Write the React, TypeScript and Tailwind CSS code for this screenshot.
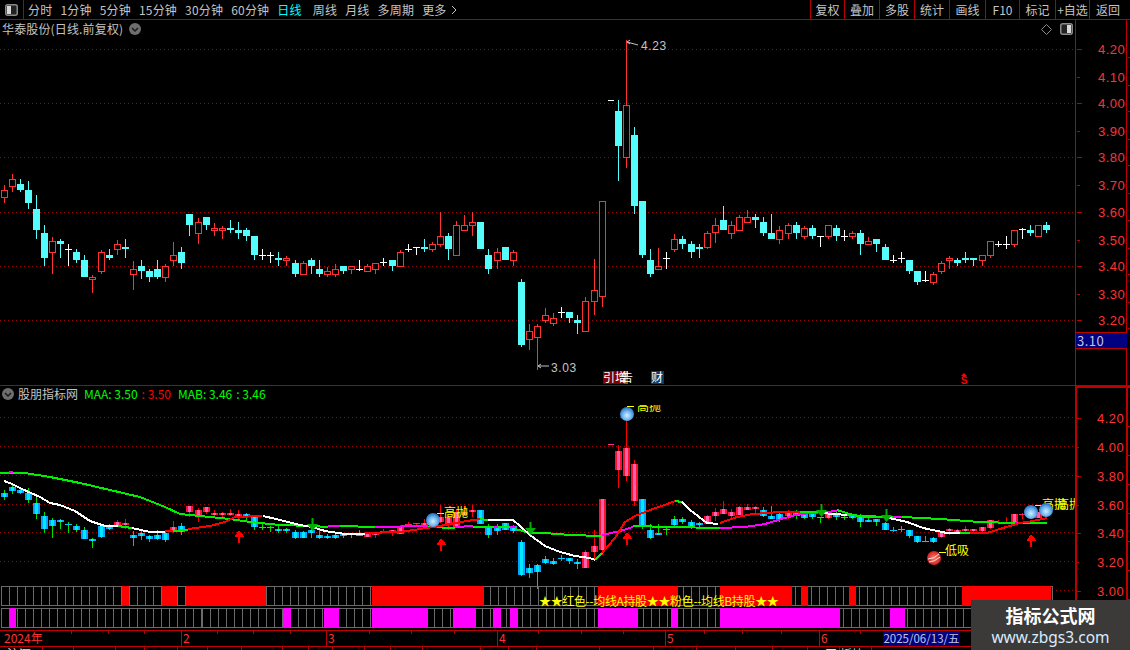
import React from 'react';

// x, body top, body bottom, wick top, wick bottom, type (r = red, c = cyan, w = doji)
type Bar = [number, number, number, number, number, string];

const bars: Bar[] = [
  [4, 190, 198, 185, 203, 'r'], [12, 179, 187, 174, 192, 'r'], [20, 184, 190, 179, 192, 'c'], [28, 190, 203, 181, 209, 'c'],
  [36, 209, 230, 195, 239, 'c'], [44, 233, 258, 225, 266, 'c'], [52, 241, 253, 237, 274, 'r'], [60, 241, 244, 239, 258, 'c'],
  [68, 249, 249, 244, 266, 'w'], [76, 252, 260, 249, 263, 'c'], [84, 260, 277, 255, 277, 'c'], [92, 277, 280, 275, 293, 'r'],
  [101, 252, 272, 250, 274, 'r'], [109, 255, 258, 249, 260, 'c'], [117, 244, 250, 240, 255, 'r'], [125, 247, 249, 239, 258, 'c'],
  [133, 269, 275, 261, 290, 'r'], [141, 266, 271, 260, 279, 'c'], [149, 271, 277, 269, 282, 'c'], [157, 269, 277, 260, 279, 'c'],
  [165, 266, 278, 264, 282, 'r'], [173, 255, 261, 242, 266, 'r'], [181, 252, 263, 247, 269, 'c'], [189, 214, 225, 214, 236, 'c'],
  [198, 222, 234, 218, 244, 'r'], [206, 217, 225, 217, 230, 'c'], [214, 228, 231, 223, 236, 'r'], [222, 228, 231, 226, 239, 'r'],
  [230, 228, 230, 220, 233, 'c'], [238, 230, 233, 222, 239, 'c'], [246, 230, 236, 228, 241, 'c'], [254, 236, 255, 236, 260, 'c'],
  [262, 255, 255, 249, 260, 'w'], [270, 255, 255, 252, 263, 'w'], [278, 258, 260, 252, 266, 'c'], [286, 258, 261, 256, 266, 'r'],
  [295, 263, 274, 260, 277, 'c'], [303, 263, 275, 261, 275, 'r'], [311, 260, 266, 258, 274, 'c'], [319, 269, 274, 260, 277, 'c'],
  [327, 271, 275, 267, 277, 'r'], [335, 269, 275, 264, 277, 'r'], [343, 266, 271, 266, 274, 'c'], [351, 266, 270, 266, 274, 'r'],
  [359, 269, 269, 260, 271, 'w'], [367, 266, 272, 264, 272, 'r'], [375, 263, 270, 263, 274, 'r'], [383, 262, 262, 258, 266, 'w'],
  [392, 260, 266, 260, 271, 'c'], [400, 252, 267, 250, 267, 'r'], [408, 249, 249, 244, 252, 'w'], [416, 247, 247, 247, 255, 'w'],
  [424, 247, 249, 239, 252, 'c'], [432, 244, 250, 242, 252, 'r'], [440, 236, 245, 212, 247, 'r'], [448, 236, 249, 233, 260, 'c'],
  [456, 225, 256, 221, 256, 'r'], [464, 225, 231, 215, 231, 'r'], [472, 222, 226, 212, 236, 'r'], [480, 222, 249, 222, 249, 'c'],
  [488, 255, 269, 249, 274, 'c'], [497, 252, 261, 248, 269, 'r'], [505, 247, 260, 247, 260, 'c'], [513, 252, 261, 250, 266, 'r'],
  [521, 282, 345, 279, 347, 'c'], [529, 331, 340, 324, 350, 'r'], [537, 326, 338, 324, 370, 'r'], [545, 315, 321, 308, 323, 'r'],
  [553, 318, 324, 313, 326, 'r'], [561, 312, 312, 307, 318, 'w'], [569, 312, 318, 312, 323, 'c'], [577, 320, 323, 315, 334, 'c'],
  [585, 301, 332, 297, 332, 'r'], [594, 290, 302, 259, 315, 'r'], [602, 201, 297, 201, 307, 'r'], [618, 111, 146, 100, 181, 'c'],
  [626, 105, 158, 40, 168, 'r'], [634, 135, 206, 127, 214, 'c'], [642, 201, 255, 201, 258, 'c'], [650, 260, 274, 249, 277, 'c'],
  [658, 266, 270, 248, 270, 'r'], [666, 258, 258, 252, 269, 'w'], [674, 239, 250, 234, 252, 'r'], [682, 239, 244, 236, 249, 'c'],
  [691, 244, 252, 241, 258, 'c'], [699, 247, 249, 244, 258, 'c'], [707, 233, 248, 231, 249, 'r'], [715, 225, 233, 218, 243, 'r'],
  [723, 220, 230, 206, 230, 'c'], [731, 225, 234, 221, 239, 'r'], [739, 217, 231, 215, 231, 'r'], [747, 217, 223, 210, 223, 'r'],
  [755, 217, 220, 214, 228, 'c'], [763, 222, 233, 217, 236, 'c'], [771, 233, 239, 214, 239, 'c'], [779, 230, 240, 226, 244, 'r'],
  [788, 225, 234, 223, 239, 'r'], [796, 225, 233, 222, 239, 'c'], [804, 228, 237, 226, 239, 'r'], [812, 228, 236, 225, 239, 'c'],
  [820, 236, 236, 236, 247, 'w'], [828, 225, 237, 225, 239, 'r'], [836, 228, 236, 225, 241, 'c'], [844, 236, 236, 230, 241, 'w'],
  [852, 233, 237, 231, 239, 'r'], [860, 233, 244, 230, 255, 'c'], [868, 241, 245, 237, 245, 'r'], [876, 239, 244, 239, 252, 'c'],
  [885, 247, 260, 244, 260, 'c'], [893, 260, 260, 255, 263, 'w'], [901, 258, 258, 252, 263, 'w'], [909, 260, 271, 260, 274, 'c'],
  [917, 271, 282, 271, 285, 'c'], [925, 280, 280, 271, 282, 'w'], [933, 274, 283, 272, 285, 'r'], [941, 263, 272, 261, 274, 'r'],
  [949, 258, 261, 256, 269, 'r'], [957, 260, 263, 258, 266, 'c'], [965, 258, 260, 252, 263, 'c'], [973, 258, 260, 258, 266, 'c'],
  [982, 255, 261, 255, 266, 'r'], [990, 241, 256, 241, 258, 'r'], [998, 244, 244, 241, 247, 'w'], [1006, 244, 244, 236, 249, 'w'],
  [1014, 230, 245, 230, 247, 'r'], [1022, 229, 229, 228, 239, 'w'], [1030, 230, 233, 225, 236, 'c'], [1038, 225, 237, 225, 237, 'r'],
  [1046, 225, 230, 222, 233, 'c'],
];

// the indicator pane colours its bars by its own signal, not by open/close
const pinkBars = [[117, 125], [173, 173], [189, 238], [367, 472], [585, 634], [707, 755], [788, 788], [828, 828], [941, 1046]];
const isPink = (x: number) => pinkBars.some(([a, b]) => x >= a && x <= b);

const lowerY = (y: number) => 562 - (320 - y) * 0.531;

const WHITE = '#ffffff';
const GREEN = '#00f000';
const RED = '#ff0000';
const PINK = '#ff00ff';

const lines: [string, number[][]][] = [
  [GREEN, [[0, 473], [25, 473], [50, 477], [80, 483], [110, 490], [140, 497], [165, 507], [180, 514], [200, 516], [230, 519], [250, 522], [280, 525], [312, 526], [328, 527]]],
  [PINK, [[9, 472], [13, 472]]],
  [PINK, [[328, 526], [340, 526]]],
  [GREEN, [[340, 526], [375, 527]]],
  [PINK, [[375, 527], [428, 526]]],
  [GREEN, [[428, 527], [455, 528]]],
  [PINK, [[455, 527], [473, 526]]],
  [GREEN, [[473, 527], [494, 527]]],
  [PINK, [[494, 527], [498, 527]]],
  [GREEN, [[498, 527], [510, 527]]],
  [PINK, [[510, 527], [515, 527]]],
  [GREEN, [[515, 529], [530, 533], [545, 533], [570, 535], [602, 536]]],
  [PINK, [[602, 535], [620, 531], [633, 527]]],
  [GREEN, [[633, 526], [670, 527], [720, 528]]],
  [PINK, [[720, 528], [745, 527], [765, 524], [785, 518], [800, 514], [837, 511]]],
  [GREEN, [[837, 510], [853, 515], [867, 517], [893, 517]]],
  [PINK, [[893, 517], [902, 517]]],
  [GREEN, [[902, 517], [940, 519], [980, 522], [1015, 523]]],
  [PINK, [[1015, 523], [1023, 523]]],
  [GREEN, [[1023, 523], [1047, 523]]],
  [WHITE, [[4, 481], [12, 484], [22, 489], [40, 497], [50, 503], [60, 505], [75, 511], [90, 521], [105, 526], [118, 526]]],
  [GREEN, [[118, 526], [132, 528]]],
  [WHITE, [[132, 528], [150, 532], [165, 532]]],
  [RED, [[165, 531], [173, 531]]],
  [GREEN, [[173, 531], [188, 530]]],
  [RED, [[188, 529], [210, 526], [225, 522], [235, 517], [262, 516]]],
  [WHITE, [[263, 516], [280, 520], [300, 525], [312, 527], [325, 531], [345, 534], [365, 534]]],
  [RED, [[365, 533], [400, 532], [420, 529], [440, 526], [455, 523], [480, 519]]],
  [GREEN, [[480, 519], [488, 520]]],
  [WHITE, [[488, 520], [513, 520], [520, 526], [530, 535], [545, 546], [560, 552], [575, 556], [590, 558], [595, 560]]],
  [GREEN, [[595, 560], [602, 553]]],
  [RED, [[602, 553], [615, 538], [625, 522], [635, 516], [650, 510], [670, 503], [675, 501]]],
  [GREEN, [[675, 501], [682, 502]]],
  [WHITE, [[682, 502], [690, 510], [707, 523], [718, 524]]],
  [RED, [[720, 523], [737, 517], [753, 514], [780, 512], [800, 512]]],
  [GREEN, [[800, 512], [822, 512]]],
  [WHITE, [[822, 513], [847, 515]]],
  [GREEN, [[847, 515], [885, 517]]],
  [WHITE, [[885, 517], [907, 522], [923, 528], [947, 533], [960, 533]]],
  [GREEN, [[960, 533], [970, 533]]],
  [RED, [[970, 533], [987, 533], [1003, 528], [1020, 523], [1033, 521], [1047, 518]]],
];

const redRow = [[122, 129], [162, 177], [186, 266], [372, 484], [598, 678], [720, 792], [801, 808], [849, 856], [962, 1051]];
const pinkRow = [[9, 16], [283, 291], [324, 339], [372, 428], [453, 476], [493, 501], [510, 518], [598, 638], [671, 678], [720, 840], [890, 905]];
const cells = Array.from({ length: 131 }, (_, i) => Math.round(1 + i * 8.02));

const navLeft = ['分时', '1分钟', '5分钟', '15分钟', '30分钟', '60分钟', '日线', '周线', '月线', '多周期'];

const upperTicks = [
  [49, '4.20'], [77, '4.10'], [103, '4.00'], [131, '3.90'], [157, '3.80'], [185, '3.70'],
  [212, '3.60'], [240, '3.50'], [266, '3.40'], [294, '3.30'], [320, '3.20'],
] as [number, string][];
const lowerTicks = [[418, '4.20'], [447, '4.00'], [476, '3.80'], [505, '3.60'], [533, '3.40'], [562, '3.20'], [591, '3.00']] as [number, string][];

const smallTicks = [71, 108, 144, 217, 253, 290, 369, 411, 454, 538, 581, 623, 704, 742, 781, 860];
const monthTicks = [[181, '2'], [326, '3'], [497, '4'], [665, '5'], [819, '6']] as [number, string][];
const tabLines = [42, 73, 115, 144, 177, 207, 241, 282, 308, 332, 364, 390, 422, 480, 508, 536, 599, 653, 696, 735, 772, 807, 839, 871];

const CJK = '"Noto Sans CJK SC","Liberation Sans",sans-serif';

function ToggleIcon({ side }: { side: 'left' | 'right' }) {
  return (
    <svg width="13" height="12" viewBox="0 0 13 12">
      <rect x="0.75" y="0.75" width="11.5" height="10.5" rx="2" fill="#222" stroke="#8a8a8a" strokeWidth="1.5" />
      <rect x={side === 'left' ? 2 : 7} y="2" width="4" height="8" fill="#d8d8d8" />
    </svg>
  );
}

function Chevron() {
  return (
    <svg width="12" height="12" viewBox="0 0 12 12">
      <circle cx="6" cy="6" r="6" fill="#6e6e6e" />
      <path d="M3 5 L6 8 L9 5" fill="none" stroke="#1a1a1a" strokeWidth="1.5" />
    </svg>
  );
}

function UpperCandle({ b }: { b: Bar }) {
  const [x, top, bot, wt, wb, t] = b;
  const color = t === 'r' ? '#ff3232' : t === 'c' ? '#54fcfc' : '#ffffff';
  return (
    <g shapeRendering="crispEdges">
      <rect x={x} y={wt} width="1" height={wb - wt} fill={color} />
      {t === 'w' ? (
        <rect x={x - 3} y={top} width="7" height="1" fill={color} />
      ) : t === 'c' ? (
        <rect x={x - 3} y={top} width="7" height={Math.max(bot - top, 2)} fill={color} />
      ) : (
        <rect x={x - 2.5} y={top + 0.5} width="6" height={Math.max(bot - top - 1, 1)} fill="#000" stroke={color} />
      )}
    </g>
  );
}

function LowerCandle({ b }: { b: Bar }) {
  const [x, top0, bot0, wt0, wb0, t] = b;
  const top = Math.round(lowerY(top0));
  const bot = Math.round(lowerY(bot0));
  const wt = Math.round(lowerY(wt0));
  const wb = Math.round(lowerY(wb0));
  const pink = isPink(x);
  const h = Math.max(bot - top, 2);
  return (
    <g shapeRendering="crispEdges">
      <rect x={x} y={wt} width="1" height={wb - wt} fill={pink ? '#ff0000' : '#00e000'} />
      {t === 'w' ? (
        <rect x={x - 3} y={top} width="7" height="1" fill={pink ? '#ff2060' : '#00c8ff'} />
      ) : (
        <>
          <rect x={x - 3} y={top} width="7" height={h} fill={pink ? '#ff1030' : '#00a4ff'} />
          <rect x={x - 1} y={top} width="3" height={h} fill={pink ? '#ff60b0' : '#00eaff'} />
        </>
      )}
    </g>
  );
}

function Ball({ x, y, red }: { x: number; y: number; red?: boolean }) {
  return (
    <g>
      <circle cx={x} cy={y} r="7" fill={red ? 'url(#ballRed)' : 'url(#ballBlue)'} />
      {red && <path d={`M${x - 6} ${y + 1} Q${x} ${y + 1} ${x + 5} ${y - 4} M${x - 5} ${y + 4} Q${x} ${y + 4} ${x + 6} ${y - 1}`} stroke="#ffe0e0" strokeWidth="1" fill="none" />}
    </g>
  );
}

function UpArrow({ x, y }: { x: number; y: number }) {
  return (
    <g shapeRendering="crispEdges" fill="#ff0000">
      <polygon points={`${x},${y} ${x + 5.5},${y + 7} ${x - 4.5},${y + 7}`} />
      <rect x={x - 1} y={y + 6} width="2" height="7" />
    </g>
  );
}

function DownArrow({ x, y }: { x: number; y: number }) {
  return (
    <g fill="#00b000">
      <rect x={x - 0.5} y={y} width="2" height="7" />
      <polygon points={`${x - 5},${y + 6} ${x + 6},${y + 6} ${x + 0.5},${y + 13}`} />
    </g>
  );
}

function AxisTicks({ ticks, top, height }: { ticks: [number, string][]; top: number; height: number }) {
  return (
    <svg width="55" height={height} viewBox={`1075 ${top} 55 ${height}`} className="block" fontFamily='"Liberation Sans",sans-serif'>
      {ticks.map(([y, label], i) => (
        <g key={label}>
          <rect x="1076" y={y} width={i % 2 === 0 ? 5 : 3} height="1" fill="#c00000" shapeRendering="crispEdges" />
          <text x="1097" y={y + 5} fontSize="13" letterSpacing="0.5" fill="#ff3232">{label}</text>
          <rect x="1127" y={y + 8} width="3" height="1" fill="#c00000" shapeRendering="crispEdges" />
        </g>
      ))}
    </svg>
  );
}

export default function App() {
  return (
    <div className="relative flex h-[650px] w-[1130px] flex-col overflow-hidden bg-black font-['Noto_Sans_CJK_SC','Liberation_Sans',sans-serif] text-xs text-[#c4c4c4]">
      {/* top toolbar */}
      <div className="flex h-5 shrink-0 items-stretch border-b border-[#b00000]">
        <div className="flex w-[24px] items-center justify-center border-r border-[#b00000]">
          <ToggleIcon side="left" />
        </div>
        <div className="flex items-center gap-[8px] pl-[4px] tracking-[0.2px]">
          {navLeft.map((item) => (
            <span key={item} className={item === '日线' ? 'mr-[3px] text-[#00ffff]' : ''}>{item}</span>
          ))}
          <span className="flex items-center gap-1">
            更多
            <svg width="6" height="10" viewBox="0 0 6 10"><path d="M1 1 L5 5 L1 9" fill="none" stroke="#c4c4c4" /></svg>
          </span>
        </div>
        <div className="ml-auto flex">
          <div className="flex w-[34px] items-center justify-center border-l border-[#b00000]">复权</div>
          <div className="flex w-[35px] items-center justify-center border-l border-[#b00000]">叠加</div>
          <div className="flex w-[35px] items-center justify-center border-l border-[#b00000]">多股</div>
          <div className="flex w-[35px] items-center justify-center border-l border-[#b00000]">统计</div>
          <div className="flex w-[36px] items-center justify-center border-l border-[#b00000]">画线</div>
          <div className="flex w-[34px] items-center justify-center border-l border-[#b00000]">F10</div>
          <div className="flex w-[36px] items-center justify-center border-l border-[#b00000]">标记</div>
          <div className="flex w-[34px] items-center justify-center border-l border-[#b00000]">+自选</div>
          <div className="flex w-[41px] items-center justify-center border-l border-[#b00000] pr-[4px]">返回</div>
        </div>
      </div>

      {/* price pane */}
      <div className="flex h-[366px] shrink-0 border-b border-[#b00000]">
        <div className="relative w-[1075px]">
          <svg width="1075" height="365" viewBox="0 20 1075 365" className="block" fontFamily='"Liberation Sans",sans-serif'>
            {[49, 103, 157, 212, 266, 320].map((y) => (
              <line key={y} x1="0" x2="1075" y1={y + 0.5} y2={y + 0.5} stroke="#a00000" strokeDasharray="1 3" />
            ))}
            {bars.map((b) => <UpperCandle key={b[0]} b={b} />)}
            <rect x="608" y="100" width="6" height="1" fill="#fff" shapeRendering="crispEdges" />
            <path d="M627 42 L638 45 M627 42 L630 40 M627 42 L630 44" stroke="#c4c4c4" fill="none" />
            <text x="641" y="50" fontSize="12" letterSpacing="0.6" fill="#c4c4c4">4.23</text>
            <path d="M538 366 L549 366 M538 366 L541 364 M538 366 L541 368" stroke="#c4c4c4" fill="none" />
            <text x="551" y="372" fontSize="12" letterSpacing="0.6" fill="#c4c4c4">3.03</text>
            <rect x="603" y="371" width="25" height="13" fill="#800000" />
            <rect x="624" y="371" width="4" height="13" fill="#8a5a10" />
            <text x="603" y="382" fontSize="12" fill="#fff" fontFamily={CJK}>引增</text>
            <text x="621" y="382" fontSize="12" fill="#fff" fontFamily={CJK}>告</text>
            <rect x="651" y="371" width="13" height="13" fill="#0a3a6a" />
            <text x="651" y="382" fontSize="12" fill="#fff" fontFamily={CJK}>财</text>
            <polygon points="964,373 967,376 961,376" fill="#ff0000" />
            <text x="964" y="384" fontSize="10" fontWeight="bold" textAnchor="middle" fill="#ff0000">S</text>
          </svg>
          <div className="absolute left-[2px] top-[1px] flex items-center gap-[6px] tracking-[0.15px]">
            <span>华泰股份(日线.前复权)</span>
            <Chevron />
          </div>
          <div className="absolute right-[2px] top-[3px] flex items-center gap-[8px]">
            <svg width="11" height="11" viewBox="0 0 11 11"><path d="M5.5 0.5 L10.5 5.5 L5.5 10.5 L0.5 5.5 Z" fill="none" stroke="#8a8a8a" /></svg>
            <ToggleIcon side="right" />
          </div>
        </div>
        <div className="relative w-[55px] border-l border-[#c00000]">
          <AxisTicks ticks={upperTicks} top={20} height={365} />
          <div className="absolute inset-y-0 left-[50px] w-px bg-[#c00000]" />
          <div className="absolute left-0 top-[312px] flex h-[17px] w-[51px] items-center border-y border-[#c00000] bg-[#000080] pl-[1px] text-[13px] tracking-[0.5px] text-[#c4c4e0]">3.10</div>
        </div>
      </div>

      {/* indicator pane */}
      <div className="flex h-[244px] shrink-0">
        <div className="relative w-[1075px]">
          <svg width="1075" height="244" viewBox="0 386 1075 244" className="block" fontFamily={CJK}>
            <defs>
              <radialGradient id="ballBlue" cx="50%" cy="60%" r="55%">
                <stop offset="0%" stopColor="#d4f0ff" />
                <stop offset="55%" stopColor="#72b8f0" />
                <stop offset="100%" stopColor="#2c78c8" />
              </radialGradient>
              <radialGradient id="ballRed" cx="50%" cy="50%" r="55%">
                <stop offset="0%" stopColor="#ff8070" />
                <stop offset="100%" stopColor="#c81818" />
              </radialGradient>
              <clipPath id="clipTop"><rect x="620" y="405" width="60" height="10" /></clipPath>
            </defs>
            {[417, 446, 475, 504, 532, 561].map((y) => (
              <line key={y} x1="0" x2="1075" y1={y + 0.5} y2={y + 0.5} stroke="#a00000" strokeDasharray="1 3" />
            ))}
            <line x1="1052" x2="1075" y1="590.5" y2="590.5" stroke="#a00000" strokeDasharray="1 3" />
            {bars.map((b) => <LowerCandle key={b[0]} b={b} />)}
            <rect x="608" y="444" width="6" height="1" fill="#ff3080" shapeRendering="crispEdges" />
            {lines.map(([color, pts], i) => (
              <polyline key={i} points={pts.map((p) => p.join(',')).join(' ')} fill="none" stroke={color} strokeWidth="2" shapeRendering="crispEdges" />
            ))}
            {[[312, 518], [530, 522], [821, 504], [886, 509]].map(([x, y]) => <DownArrow key={x} x={x} y={y} />)}
            {[[239, 530], [441, 538], [627, 532], [1031, 534]].map(([x, y]) => <UpArrow key={x} x={x} y={y} />)}

            {/* signal strips */}
            {cells.map((x) => (
              <g key={x} shapeRendering="crispEdges" fill="none" stroke="#6a6a6a">
                <rect x={x + 0.5} y="586.5" width="8" height="19" />
                <rect x={x + 0.5} y="608.5" width="8" height="19" />
              </g>
            ))}
            {redRow.map(([a, b]) => <rect key={a} x={a} y="586" width={b - a} height="20" fill="#ff0000" shapeRendering="crispEdges" />)}
            {pinkRow.map(([a, b]) => <rect key={a} x={a} y="608" width={b - a} height="20" fill="#ff00ff" shapeRendering="crispEdges" />)}
            <text x="539" y="606" fontSize="12" letterSpacing="-0.35" fill="#ffff00">★★红色--均线A持股★★粉色--均线B持股★★</text>

            <g fill="#ffff00" fontSize="12">
              <rect x="437" y="513" width="7" height="1" />
              <text x="444" y="517">高抛</text>
              <g clipPath="url(#clipTop)">
                <rect x="627" y="406" width="7" height="1" />
                <text x="637" y="411">高抛</text>
              </g>
              <rect x="1035" y="505" width="7" height="1" />
              <text x="1042" y="509">高抛</text>
              <text x="1057" y="509">高抛</text>
              <rect x="939" y="552" width="7" height="1" />
              <text x="945" y="555">低吸</text>
            </g>
            <Ball x={433} y={520} />
            <Ball x={627} y={414} />
            <Ball x={1031} y={512} />
            <Ball x={1046} y={510} />
            <Ball x={934} y={558} red />
          </svg>
          <div className="absolute left-[2px] top-0 flex items-center">
            <Chevron />
            <span className="ml-[4px] mr-[6px]">股朋指标网</span>
            <span className="text-[#00ff00]">MAA: 3.50</span>
            <span className="ml-[4px] text-[#ff0000]">: 3.50</span>
            <span className="ml-[7px] text-[#00ff00]">MAB: 3.46</span>
            <span className="ml-[4px] text-[#00ff00]">: 3.46</span>
          </div>
        </div>
        <div className="relative w-[55px] border-l-2 border-t-2 border-[#c00000]">
          <div className="absolute inset-y-0 left-[49px] w-[2px] bg-[#c00000]" />
          <div className="-ml-[2px] -mt-[2px]">
            <AxisTicks ticks={lowerTicks} top={386} height={244} />
          </div>
        </div>
      </div>

      {/* date axis */}
      <div className="relative h-4 shrink-0 border-t border-[#c00000]">
        <svg width="1130" height="15" viewBox="0 631 1130 15" className="block" fontFamily={CJK} shapeRendering="crispEdges">
          {smallTicks.map((x) => <rect key={x} x={x} y="631" width="1" height="3" fill="#c00000" />)}
          {monthTicks.map(([x, label]) => (
            <g key={label}>
              <rect x={x} y="631" width="1" height="15" fill="#c00000" />
              <text x={x + 2} y="643" fontSize="12" fill="#ff3232">{label}</text>
            </g>
          ))}
          <text x="4" y="643" fontSize="12" fill="#ff3232">2024年</text>
        </svg>
        <div className="absolute left-[883px] top-0 flex h-[15px] w-[77px] items-center justify-center whitespace-nowrap bg-[#000080] text-[11.5px] text-[#c4c4e0]">2025/06/13/五</div>
      </div>

      {/* tab strip, cut by the window edge */}
      <div className="h-1 shrink-0 overflow-hidden border-t border-[#c00000]">
        <svg width="1130" height="3" viewBox="0 647 1130 3" className="block" fontFamily={CJK}>
          {tabLines.map((x) => <rect key={x} x={x} y="647" width="1" height="3" fill="#c00000" />)}
          <text x="7" y="659" fontSize="12" fill="#e0e0e0">沪深</text>
          <text x="825" y="659" fontSize="12" fill="#e0e0e0">工</text>
          <text x="840" y="659" fontSize="12" fill="#54fcfc">板块</text>
        </svg>
      </div>

      {/* site watermark */}
      <div className="absolute bottom-0 right-0 flex h-[50px] w-[159px] flex-col items-center justify-center bg-[#3c3a39]">
        <span className="text-[18px] font-bold leading-[24px] text-white">指标公式网</span>
        <span className="font-['Noto_Sans',sans-serif] text-[15.5px] leading-[20px] text-[#d8ecff]">www.zbgs3.com</span>
      </div>
    </div>
  );
}
